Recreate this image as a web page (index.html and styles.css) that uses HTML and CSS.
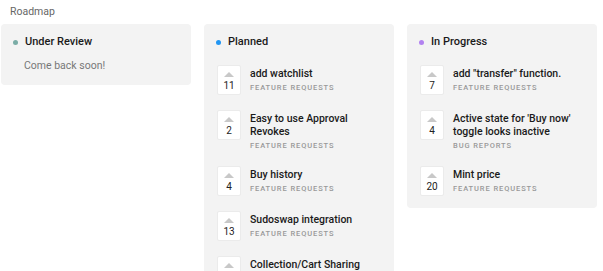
FILE: index.html
```html
<!DOCTYPE html>
<html>
<head>
<meta charset="utf-8">
<link rel="stylesheet" href="styles.css">
</head>
<body>
<div class="page-title">Roadmap</div>
<div class="board">
  <section class="column">
    <h2 class="col-head"><span class="dot dot-review"></span>Under Review</h2>
    <p class="empty">Come back soon!</p>
  </section>
  <section class="column">
    <h2 class="col-head"><span class="dot dot-planned"></span>Planned</h2>
    <div class="item">
      <div class="vote"><span class="arrow"></span><span class="count">11</span></div>
      <div class="info"><div class="title">add watchlist</div><div class="cat">Feature Requests</div></div>
    </div>
    <div class="item">
      <div class="vote"><span class="arrow"></span><span class="count">2</span></div>
      <div class="info"><div class="title">Easy to use Approval Revokes</div><div class="cat">Feature Requests</div></div>
    </div>
    <div class="item">
      <div class="vote"><span class="arrow"></span><span class="count">4</span></div>
      <div class="info"><div class="title">Buy history</div><div class="cat">Feature Requests</div></div>
    </div>
    <div class="item">
      <div class="vote"><span class="arrow"></span><span class="count">13</span></div>
      <div class="info"><div class="title">Sudoswap integration</div><div class="cat">Feature Requests</div></div>
    </div>
    <div class="item">
      <div class="vote"><span class="arrow"></span><span class="count">9</span></div>
      <div class="info"><div class="title">Collection/Cart Sharing</div><div class="cat">Feature Requests</div></div>
    </div>
  </section>
  <section class="column">
    <h2 class="col-head"><span class="dot dot-progress"></span>In Progress</h2>
    <div class="item">
      <div class="vote"><span class="arrow"></span><span class="count">7</span></div>
      <div class="info"><div class="title">add "transfer" function.</div><div class="cat">Feature Requests</div></div>
    </div>
    <div class="item">
      <div class="vote"><span class="arrow"></span><span class="count">4</span></div>
      <div class="info"><div class="title">Active state for 'Buy now' toggle looks inactive</div><div class="cat">Bug Reports</div></div>
    </div>
    <div class="item">
      <div class="vote"><span class="arrow"></span><span class="count">20</span></div>
      <div class="info"><div class="title">Mint price</div><div class="cat">Feature Requests</div></div>
    </div>
  </section>
</div>
</body>
</html>
```
FILE: styles.css
```css
html, body {
  margin: 0;
  padding: 0;
  background: #ffffff;
  font-family: Roboto, Inter, "Liberation Sans", sans-serif;
  color: #1a1a1a;
}
.page-title {
  font-size: 10.5px;
  color: #666;
  padding: 5px 0 0 10px;
  line-height: 14px;
  height: 19px;
}
.board {
  display: flex;
  align-items: flex-start;
  gap: 13px;
  padding-left: 1px;
}
.column {
  width: 190px;
  flex: none;
  background: #f3f3f3;
  border-radius: 4px;
  padding: 11px 0 12px 0;
  box-sizing: border-box;
}
.col-head {
  margin: 0;
  display: flex;
  align-items: center;
  font-size: 11px;
  font-weight: 500;
  line-height: 14px;
  padding-left: 12px;
}
.dot {
  width: 5px;
  height: 5px;
  border-radius: 50%;
  margin-right: 7px;
}
.dot-review { background: #7aaca6; }
.dot-planned { background: #2196f3; }
.dot-progress { background: #b282f0; }
.empty {
  margin: 10px 0 0 23px;
  font-size: 10.5px;
  line-height: 14px;
  color: #777;
}
.item {
  display: flex;
  padding: 0 12px 0 13px;
  margin-top: 15px;
}
.col-head + .item { margin-top: 16px; }
.vote {
  width: 24px;
  height: 30px;
  flex: none;
  background: #fff;
  border: 1px solid #ebebeb;
  border-radius: 2px;
  box-sizing: border-box;
  display: flex;
  flex-direction: column;
  align-items: center;
}
.arrow {
  width: 0;
  height: 0;
  border-left: 5px solid transparent;
  border-right: 5px solid transparent;
  border-bottom: 5px solid #c8c8c8;
  margin-top: 6px;
}
.count {
  font-size: 10px;
  line-height: 12px;
  margin-top: 3px;
  color: #222;
}
.info {
  margin-left: 9px;
  padding-top: 2px;
}
.title {
  font-size: 10.5px;
  font-weight: 500;
  line-height: 13px;
}
.cat {
  font-size: 7.5px;
  font-weight: 500;
  letter-spacing: 0.9px;
  text-transform: uppercase;
  color: #999;
  line-height: 11px;
  margin-top: 2px;
}
```
